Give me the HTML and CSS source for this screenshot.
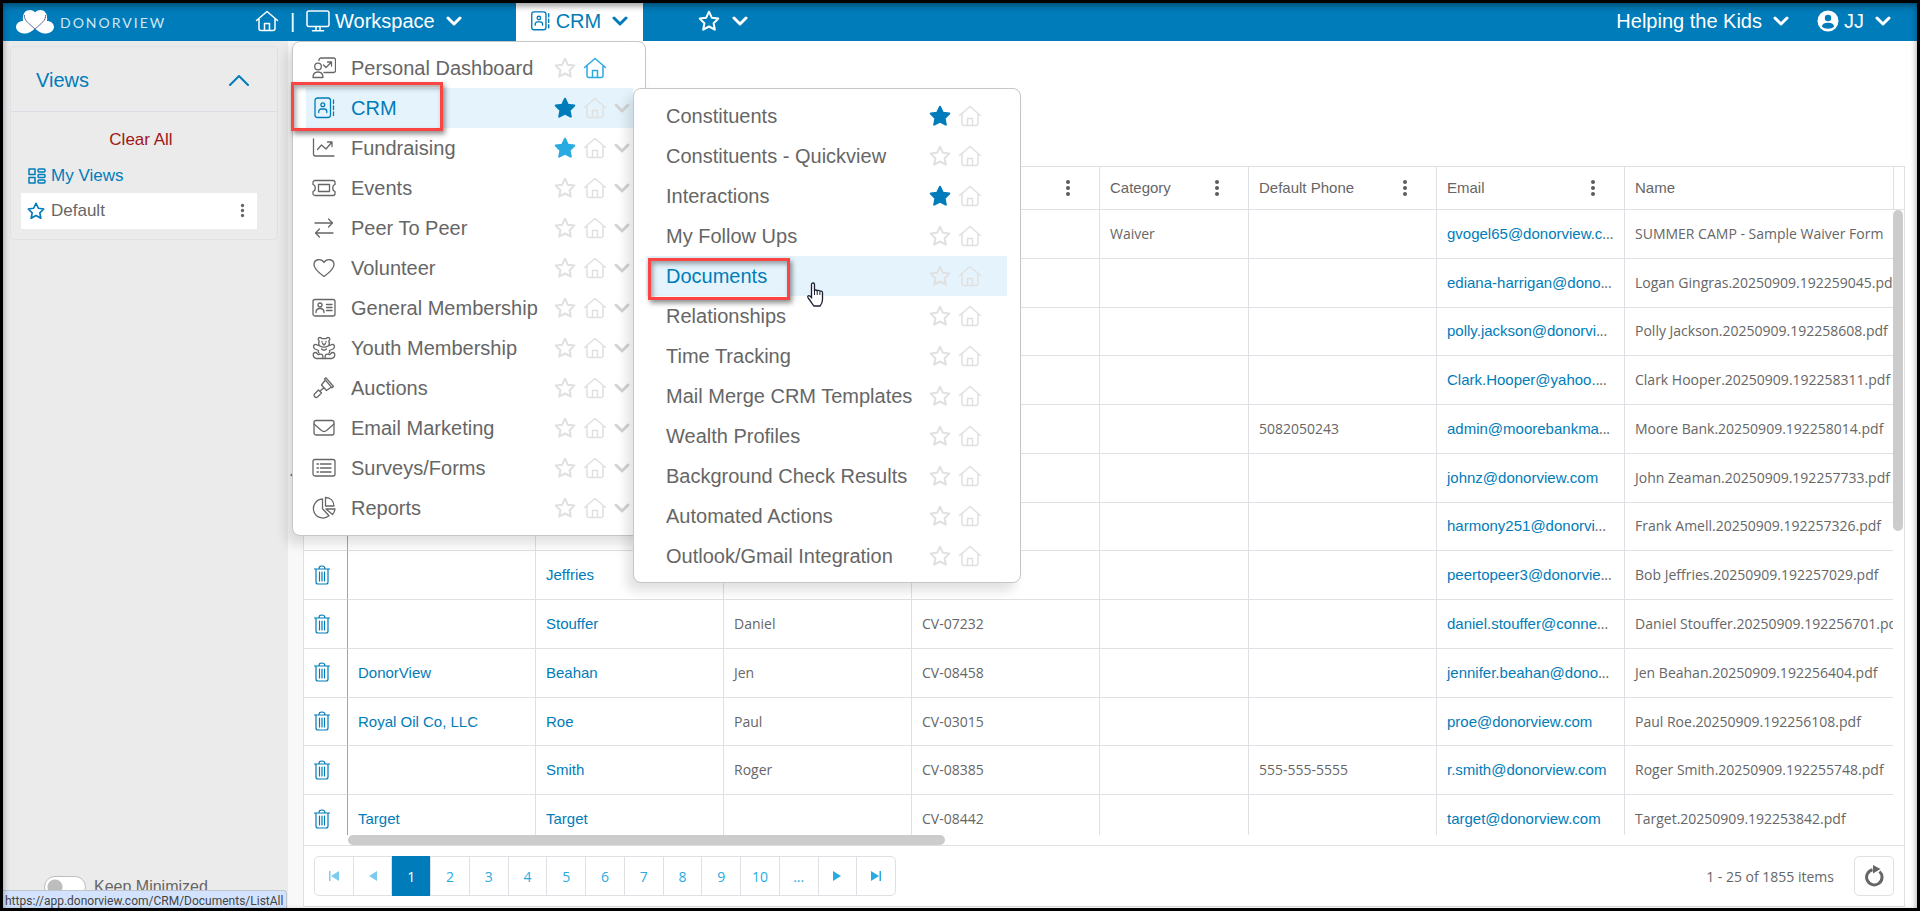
FILE: index.html
```html
<!DOCTYPE html>
<html lang="en">
<head>
    <meta charset="UTF-8">
    <title>Documents - DonorView</title>
    <link rel="stylesheet" href="styles.css">
</head>
<body>
    <!-- shared icons -->
    <svg class="sprite" aria-hidden="true">
        <symbol id="i-home" viewBox="0 0 24 24"><path d="M1.500 11.500 12 2.500l10.500 9M4 10v9.500a2 2 0 0 0 2 2h12a2 2 0 0 0 2-2V10M9.500 21v-6.500h5V21"/></symbol>
        <symbol id="i-star" viewBox="0 0 24 24"><path d="M12 2.700l2.800 6 6.500.900-4.700 4.600 1.200 6.500L12 17.500l-5.800 3.200 1.200-6.500-4.700-4.600 6.500-.900z"/></symbol>
        <symbol id="i-down" viewBox="0 0 16 16"><path d="M2 5l6 6 6-6"/></symbol>
        <symbol id="i-crm" viewBox="0 0 24 24"><rect x="3" y="2" width="15.500" height="19.500" rx="2.500"/><circle cx="10.800" cy="8.700" r="1.900"/><path d="M6.800 16.500v-1a2.500 2.500 0 0 1 2.500-2.500h3a2.500 2.500 0 0 1 2.500 2.500v1M21.500 4v3.500M21.500 10v3.500M21.500 16v3.500"/></symbol>
        <symbol id="i-trash" viewBox="0 0 16 20"><path d="M.500 4h15M5 4c0-2.500 1-3 3-3s3 .500 3 3M2 4v13a2 2 0 0 0 2 2h8a2 2 0 0 0 2-2V4M5.500 7v9M8 7v9M10.500 7v9"/></symbol>
        <symbol id="i-dots" viewBox="0 0 6 18"><circle cx="3" cy="3" r="2"/><circle cx="3" cy="9" r="2"/><circle cx="3" cy="15" r="2"/></symbol>
    </svg>

    <header class="topbar">
        <a class="brand" href="#">
            <svg class="brand__logo" viewBox="0 0 40 26" aria-hidden="true">
                <path fill="#fff" d="M9 24.500a8 7 0 0 1-8-6c0-4 3-6.500 7-6.500C7 4 11 1 15 1c2.500 0 4 1 5 2.500C21 2 23 1 25.500 1 30 1 33 5 32 12c4 0 7 2.500 7 6.500a8 7 0 0 1-8 6c-5 0-7-1.500-11-5-4 3.500-6 5-11 5z"/>
                <path fill="none" stroke="#6f6a9c" d="M9.500 6c-1 5 5 9 10.500 14 5.500-5 11.500-9 10.500-14"/>
            </svg>
            <span class="brand__name">DONORVIEW</span>
        </a>
        <button class="topbar__item" aria-label="Home"><svg class="icon icon--24"><use href="#i-home"/></svg></button>
        <span class="topbar__divider">|</span>
        <button class="topbar__item">
            <svg class="icon icon--24" viewBox="0 0 24 24"><rect x="1" y="2" width="22" height="15.500" rx="2"/><path d="M10 17.500v4M14 17.500v4M6.500 21.800h11"/></svg>
            Workspace
            <svg class="icon icon--bold topbar__arrow"><use href="#i-down"/></svg>
        </button>
        <button class="topbar__item topbar__tab">
            <svg class="icon icon--22"><use href="#i-crm"/></svg>
            CRM
            <svg class="icon icon--bold topbar__arrow"><use href="#i-down"/></svg>
        </button>
        <button class="topbar__item topbar__favorites" aria-label="Favorites">
            <svg class="icon icon--24 icon--mid"><use href="#i-star"/></svg>
            <svg class="icon icon--bold topbar__arrow"><use href="#i-down"/></svg>
        </button>
        <button class="topbar__item topbar__org">
            Helping the Kids
            <svg class="icon icon--bold topbar__arrow"><use href="#i-down"/></svg>
        </button>
        <button class="topbar__item topbar__user">
            <svg class="icon icon--22 avatar" viewBox="0 0 22 22"><circle class="avatar__disc" cx="11" cy="11" r="10.500"/><circle class="avatar__figure" cx="11" cy="8" r="3.200"/><path class="avatar__figure" d="M4.800 16.500c1-3 2.700-3.800 6.200-3.800s5.200.800 6.200 3.800c-3 3-9.400 3-12.400 0z"/></svg>
            JJ
            <svg class="icon icon--bold topbar__arrow"><use href="#i-down"/></svg>
        </button>

        <nav class="menu menu--main">
            <ul class="menu__list">
                <li class="menu__row">
                    <svg class="icon menu__icon" viewBox="0 0 24 24"><circle cx="6" cy="10.500" r="3.300"/><path d="M1 21.500c0-4 2-5.500 5-5.500s5 1.500 5 5.500zM7 4.500V4a2 2 0 0 1 2-2h12.500A1.800 1.800 0 0 1 23.500 4v10.500a2 2 0 0 1-2 2H12M11.500 9l2.500 2.500 5-5M15.500 6h4v4"/></svg>
                    <a class="menu__link" href="#">Personal Dashboard</a>
                    <button class="mark" aria-label="Favorite"><svg class="icon icon--24 icon--mid"><use href="#i-star"/></svg></button>
                    <button class="mark mark--home" aria-label="Set as home"><svg class="icon icon--24"><use href="#i-home"/></svg></button>
                    <span class="menu__more"></span>
                </li>
                <li class="menu__row menu__row--active">
                    <svg class="icon menu__icon" viewBox="0 0 24 24"><use href="#i-crm"/></svg>
                    <a class="menu__link" href="#">CRM</a>
                    <button class="mark mark--on" aria-label="Favorite"><svg class="icon icon--24 icon--mid"><use href="#i-star"/></svg></button>
                    <button class="mark" aria-label="Set as home"><svg class="icon icon--24"><use href="#i-home"/></svg></button>
                    <span class="menu__more"><svg class="icon icon--bold"><use href="#i-down"/></svg></span>
                </li>
                <li class="menu__row">
                    <svg class="icon menu__icon" viewBox="0 0 24 24"><path d="M1.500 3v15a2 2 0 0 0 2 2H22M5.500 13.500l4-4.500 4.500 4 6-7M15.500 6H20v4.500"/></svg>
                    <a class="menu__link" href="#">Fundraising</a>
                    <button class="mark mark--light" aria-label="Favorite"><svg class="icon icon--24 icon--mid"><use href="#i-star"/></svg></button>
                    <button class="mark" aria-label="Set as home"><svg class="icon icon--24"><use href="#i-home"/></svg></button>
                    <span class="menu__more"><svg class="icon icon--bold"><use href="#i-down"/></svg></span>
                </li>
                <li class="menu__row">
                    <svg class="icon menu__icon" viewBox="0 0 24 24"><path d="M3 4.500h18a2 2 0 0 1 2 2v2c-3 1-3 6 0 7v2a2 2 0 0 1-2 2H3a2 2 0 0 1-2-2v-2c3-1 3-6 0-7v-2a2 2 0 0 1 2-2zM6.500 8.500h11v7h-11z"/></svg>
                    <a class="menu__link" href="#">Events</a>
                    <button class="mark" aria-label="Favorite"><svg class="icon icon--24 icon--mid"><use href="#i-star"/></svg></button>
                    <button class="mark" aria-label="Set as home"><svg class="icon icon--24"><use href="#i-home"/></svg></button>
                    <span class="menu__more"><svg class="icon icon--bold"><use href="#i-down"/></svg></span>
                </li>
                <li class="menu__row">
                    <svg class="icon menu__icon" viewBox="0 0 24 24"><path d="M3 7h17.500M16.500 3l4 4-4 4M21 17H3.500M7.500 13l-4 4 4 4"/></svg>
                    <a class="menu__link" href="#">Peer To Peer</a>
                    <button class="mark" aria-label="Favorite"><svg class="icon icon--24 icon--mid"><use href="#i-star"/></svg></button>
                    <button class="mark" aria-label="Set as home"><svg class="icon icon--24"><use href="#i-home"/></svg></button>
                    <span class="menu__more"><svg class="icon icon--bold"><use href="#i-down"/></svg></span>
                </li>
                <li class="menu__row">
                    <svg class="icon menu__icon" viewBox="0 0 24 24"><path d="M12 20.500C5 15.500 2 12 2 8.500 2 3.500 9 1.500 12 6.500c3-5 10-3 10 2 0 3.500-3 7-10 12z"/></svg>
                    <a class="menu__link" href="#">Volunteer</a>
                    <button class="mark" aria-label="Favorite"><svg class="icon icon--24 icon--mid"><use href="#i-star"/></svg></button>
                    <button class="mark" aria-label="Set as home"><svg class="icon icon--24"><use href="#i-home"/></svg></button>
                    <span class="menu__more"><svg class="icon icon--bold"><use href="#i-down"/></svg></span>
                </li>
                <li class="menu__row">
                    <svg class="icon menu__icon" viewBox="0 0 24 24"><rect x="1" y="3.500" width="22" height="16.500" rx="2"/><circle cx="8" cy="9" r="2"/><path d="M4 16.500c0-3 1.500-4 4-4s4 1 4 4M14.500 8.500H20M14.500 11.500H20M14.500 14.500H20"/></svg>
                    <a class="menu__link" href="#">General Membership</a>
                    <button class="mark" aria-label="Favorite"><svg class="icon icon--24 icon--mid"><use href="#i-star"/></svg></button>
                    <button class="mark" aria-label="Set as home"><svg class="icon icon--24"><use href="#i-home"/></svg></button>
                    <span class="menu__more"><svg class="icon icon--bold"><use href="#i-down"/></svg></span>
                </li>
                <li class="menu__row">
                    <svg class="icon menu__icon" viewBox="0 0 24 24"><path d="M8 10C6.500 8.500 6.500 6.500 7.200 5 5.500 4 6 1.500 8 1.500c1 0 1.600.500 2 1.200h4c.400-.700 1-1.200 2-1.200 2 0 2.500 2.500.800 3.500.700 1.500.700 3.500-.800 5-2 1.600-6 1.600-8 0zM10.500 7.500l1.500 1.500 1.500-1.500M10 5.500v.600M14 5.500v.600M7.500 9.500C5.500 10 5 8 3 8.500s-2 3.500 0 4.500l3.500 1.500M16.500 9.500c2 .500 2.500-1.500 4.500-1s2 3.500 0 4.500l-3.500 1.500M6.500 14.500c-.500 1-.200 2 .500 2.500M17.500 14.500c.500 1 .200 2-.500 2.500M10 22.500H4.500c-3.500 0-4.500-5.500-1.500-6 2-.300 2 1.500 3 2s3-1.500 4.500.500c.800 1.200.500 3-.500 3.500zM14 22.500h5.500c3.500 0 4.500-5.500 1.500-6-2-.300-2 1.500-3 2s-3-1.500-4.500.500c-.800 1.200-.500 3 .500 3.500zM10 22.500h4M9.500 13c1.500 1.500 3.500 1.500 5 0"/></svg>
                    <a class="menu__link" href="#">Youth Membership</a>
                    <button class="mark" aria-label="Favorite"><svg class="icon icon--24 icon--mid"><use href="#i-star"/></svg></button>
                    <button class="mark" aria-label="Set as home"><svg class="icon icon--24"><use href="#i-home"/></svg></button>
                    <span class="menu__more"><svg class="icon icon--bold"><use href="#i-down"/></svg></span>
                </li>
                <li class="menu__row">
                    <svg class="icon menu__icon" viewBox="0 0 24 24"><path d="M12.500 3 14 1.800l7.500 8.700-1.500 1.300M12.500 3l7.500 8.800M13 4.500 9.500 9l5 5.500 4.500-3.200M11.800 11.800l-3.300 3M2.500 18l4-4 3 3-4 4c-2 1.500-4.500-1-3-3z"/></svg>
                    <a class="menu__link" href="#">Auctions</a>
                    <button class="mark" aria-label="Favorite"><svg class="icon icon--24 icon--mid"><use href="#i-star"/></svg></button>
                    <button class="mark" aria-label="Set as home"><svg class="icon icon--24"><use href="#i-home"/></svg></button>
                    <span class="menu__more"><svg class="icon icon--bold"><use href="#i-down"/></svg></span>
                </li>
                <li class="menu__row">
                    <svg class="icon menu__icon" viewBox="0 0 24 24"><rect x="2" y="4.500" width="20" height="14.500" rx="2"/><path d="M2 8l7.500 6.500c1.500 1.200 3.500 1.200 5 0L22 8"/></svg>
                    <a class="menu__link" href="#">Email Marketing</a>
                    <button class="mark" aria-label="Favorite"><svg class="icon icon--24 icon--mid"><use href="#i-star"/></svg></button>
                    <button class="mark" aria-label="Set as home"><svg class="icon icon--24"><use href="#i-home"/></svg></button>
                    <span class="menu__more"><svg class="icon icon--bold"><use href="#i-down"/></svg></span>
                </li>
                <li class="menu__row">
                    <svg class="icon menu__icon" viewBox="0 0 24 24"><rect x="1" y="3.500" width="22" height="16.500" rx="2"/><path d="M5 8h1.500M5 12h1.500M5 16h1.500M8.500 8H19M8.500 12H19M8.500 16H19"/></svg>
                    <a class="menu__link" href="#">Surveys/Forms</a>
                    <button class="mark" aria-label="Favorite"><svg class="icon icon--24 icon--mid"><use href="#i-star"/></svg></button>
                    <button class="mark" aria-label="Set as home"><svg class="icon icon--24"><use href="#i-home"/></svg></button>
                    <span class="menu__more"><svg class="icon icon--bold"><use href="#i-down"/></svg></span>
                </li>
                <li class="menu__row">
                    <svg class="icon menu__icon" viewBox="0 0 24 24"><path d="M10.500 3A9.500 9.500 0 1 0 17 19.800l-6.500-7zM13.500 1.500V10H22c-.200-4.800-3.500-8.300-8.500-8.500zM14 13h9c-.300 2.300-1.200 4-2.500 5.500z"/></svg>
                    <a class="menu__link" href="#">Reports</a>
                    <button class="mark" aria-label="Favorite"><svg class="icon icon--24 icon--mid"><use href="#i-star"/></svg></button>
                    <button class="mark" aria-label="Set as home"><svg class="icon icon--24"><use href="#i-home"/></svg></button>
                    <span class="menu__more"><svg class="icon icon--bold"><use href="#i-down"/></svg></span>
                </li>
            </ul>
            <span class="highlight highlight--crm"></span>
        </nav>

        <nav class="menu menu--sub">
            <ul class="menu__list">
                <li class="menu__row">
                    <a class="menu__link" href="#">Constituents</a>
                    <button class="mark mark--on" aria-label="Favorite"><svg class="icon icon--24 icon--mid"><use href="#i-star"/></svg></button>
                    <button class="mark" aria-label="Set as home"><svg class="icon icon--24"><use href="#i-home"/></svg></button>
                </li>
                <li class="menu__row">
                    <a class="menu__link" href="#">Constituents - Quickview</a>
                    <button class="mark" aria-label="Favorite"><svg class="icon icon--24 icon--mid"><use href="#i-star"/></svg></button>
                    <button class="mark" aria-label="Set as home"><svg class="icon icon--24"><use href="#i-home"/></svg></button>
                </li>
                <li class="menu__row">
                    <a class="menu__link" href="#">Interactions</a>
                    <button class="mark mark--on" aria-label="Favorite"><svg class="icon icon--24 icon--mid"><use href="#i-star"/></svg></button>
                    <button class="mark" aria-label="Set as home"><svg class="icon icon--24"><use href="#i-home"/></svg></button>
                </li>
                <li class="menu__row">
                    <a class="menu__link" href="#">My Follow Ups</a>
                    <button class="mark" aria-label="Favorite"><svg class="icon icon--24 icon--mid"><use href="#i-star"/></svg></button>
                    <button class="mark" aria-label="Set as home"><svg class="icon icon--24"><use href="#i-home"/></svg></button>
                </li>
                <li class="menu__row menu__row--active">
                    <a class="menu__link" href="#">Documents</a>
                    <button class="mark" aria-label="Favorite"><svg class="icon icon--24 icon--mid"><use href="#i-star"/></svg></button>
                    <button class="mark" aria-label="Set as home"><svg class="icon icon--24"><use href="#i-home"/></svg></button>
                </li>
                <li class="menu__row">
                    <a class="menu__link" href="#">Relationships</a>
                    <button class="mark" aria-label="Favorite"><svg class="icon icon--24 icon--mid"><use href="#i-star"/></svg></button>
                    <button class="mark" aria-label="Set as home"><svg class="icon icon--24"><use href="#i-home"/></svg></button>
                </li>
                <li class="menu__row">
                    <a class="menu__link" href="#">Time Tracking</a>
                    <button class="mark" aria-label="Favorite"><svg class="icon icon--24 icon--mid"><use href="#i-star"/></svg></button>
                    <button class="mark" aria-label="Set as home"><svg class="icon icon--24"><use href="#i-home"/></svg></button>
                </li>
                <li class="menu__row">
                    <a class="menu__link" href="#">Mail Merge CRM Templates</a>
                    <button class="mark" aria-label="Favorite"><svg class="icon icon--24 icon--mid"><use href="#i-star"/></svg></button>
                    <button class="mark" aria-label="Set as home"><svg class="icon icon--24"><use href="#i-home"/></svg></button>
                </li>
                <li class="menu__row">
                    <a class="menu__link" href="#">Wealth Profiles</a>
                    <button class="mark" aria-label="Favorite"><svg class="icon icon--24 icon--mid"><use href="#i-star"/></svg></button>
                    <button class="mark" aria-label="Set as home"><svg class="icon icon--24"><use href="#i-home"/></svg></button>
                </li>
                <li class="menu__row">
                    <a class="menu__link" href="#">Background Check Results</a>
                    <button class="mark" aria-label="Favorite"><svg class="icon icon--24 icon--mid"><use href="#i-star"/></svg></button>
                    <button class="mark" aria-label="Set as home"><svg class="icon icon--24"><use href="#i-home"/></svg></button>
                </li>
                <li class="menu__row">
                    <a class="menu__link" href="#">Automated Actions</a>
                    <button class="mark" aria-label="Favorite"><svg class="icon icon--24 icon--mid"><use href="#i-star"/></svg></button>
                    <button class="mark" aria-label="Set as home"><svg class="icon icon--24"><use href="#i-home"/></svg></button>
                </li>
                <li class="menu__row">
                    <a class="menu__link" href="#">Outlook/Gmail Integration</a>
                    <button class="mark" aria-label="Favorite"><svg class="icon icon--24 icon--mid"><use href="#i-star"/></svg></button>
                    <button class="mark" aria-label="Set as home"><svg class="icon icon--24"><use href="#i-home"/></svg></button>
                </li>
            </ul>
            <span class="highlight highlight--documents"></span>
            <svg class="cursor" viewBox="0 0 20 26" aria-hidden="true"><path d="M5.500 2.500c0-2 3-2 3 0V9c0-1.500 2.700-1.300 2.700.300 0-1.500 2.700-1.300 2.700.500 0-1.300 2.600-1 2.600.700v7c0 3-1 5-2.500 6.500H8c-1.500-1.500-3-4.500-5.500-7.500-2-3 .500-4 3-1z" fill="#fff" stroke="#1b2033" stroke-width="1.300"/><path d="M8.500 8.500V13M11.200 9v4M13.900 10v3" stroke="#1b2033"/></svg>
        </nav>
    </header>

    <div class="layout">
        <aside class="sidebar">
            <section class="views">
                <header class="views__header">
                    <h2 class="views__title">Views</h2>
                    <button class="views__toggle" aria-label="Collapse views"><svg class="icon" viewBox="0 0 20 12"><path d="M1 11l9-9 9 9"/></svg></button>
                </header>
                <a class="views__clear" href="#">Clear All</a>
                <a class="views__group" href="#">
                    <svg class="icon" viewBox="0 0 18 16"><rect x="1" y="1" width="6" height="5.500"/><rect x="1" y="9.500" width="6" height="5.500"/><rect x="10" y="1" width="7" height="3" rx="1"/><rect x="10" y="6.500" width="7" height="3" rx="1"/><rect x="10" y="12" width="7" height="3" rx="1"/></svg>
                    My Views
                </a>
                <div class="views__item">
                    <svg class="icon icon--mid"><use href="#i-star"/></svg>
                    <a class="views__item-link" href="#">Default</a>
                    <button class="views__item-menu" aria-label="View options"><svg class="dots"><use href="#i-dots"/></svg></button>
                </div>
            </section>
            <label class="minimize">
                <input class="minimize__switch" type="checkbox">
                Keep Minimized
            </label>
        </aside>

        <div class="splitter">
            <button class="splitter__collapse" aria-label="Collapse sidebar"><svg viewBox="0 0 6 10"><path d="M6 0v10L0 5z"/></svg></button>
        </div>

        <main class="content">
            <div class="grid">
                <div class="grid__body">
                    <div class="grid__viewport">
                        <table class="grid__table">
                            <colgroup>
                                <col class="col-action">
                                <col class="col-text">
                                <col class="col-text">
                                <col class="col-text">
                                <col class="col-text">
                                <col class="col-category">
                                <col class="col-text">
                                <col class="col-text">
                                <col>
                            </colgroup>
                            <thead>
                                <tr>
                                    <th></th>
                                    <th></th>
                                    <th></th>
                                    <th></th>
                                    <th><div class="th"><span></span><button class="th__menu" aria-label="Column menu"><svg class="dots"><use href="#i-dots"/></svg></button></div></th>
                                    <th><div class="th">Category<button class="th__menu" aria-label="Column menu"><svg class="dots"><use href="#i-dots"/></svg></button></div></th>
                                    <th><div class="th">Default Phone<button class="th__menu" aria-label="Column menu"><svg class="dots"><use href="#i-dots"/></svg></button></div></th>
                                    <th><div class="th">Email<button class="th__menu" aria-label="Column menu"><svg class="dots"><use href="#i-dots"/></svg></button></div></th>
                                    <th><div class="th">Name</div></th>
                                </tr>
                            </thead>
                            <tbody>
                                <tr>
                                    <td><button class="delete" aria-label="Delete"><svg class="icon"><use href="#i-trash"/></svg></button></td>
                                    <td></td><td></td><td></td><td></td>
                                    <td>Waiver</td><td></td>
                                    <td><a href="#">gvogel65@donorview.c</a>...</td>
                                    <td>SUMMER CAMP - Sample Waiver Form</td>
                                </tr>
                                <tr>
                                    <td><button class="delete" aria-label="Delete"><svg class="icon"><use href="#i-trash"/></svg></button></td>
                                    <td></td><td></td><td></td><td></td><td></td><td></td>
                                    <td><a href="#">ediana-harrigan@dono</a>...</td>
                                    <td>Logan Gingras.20250909.192259045.pdf</td>
                                </tr>
                                <tr>
                                    <td><button class="delete" aria-label="Delete"><svg class="icon"><use href="#i-trash"/></svg></button></td>
                                    <td></td><td></td><td></td><td></td><td></td><td></td>
                                    <td><a href="#">polly.jackson@donorvi</a>...</td>
                                    <td>Polly Jackson.20250909.192258608.pdf</td>
                                </tr>
                                <tr>
                                    <td><button class="delete" aria-label="Delete"><svg class="icon"><use href="#i-trash"/></svg></button></td>
                                    <td></td><td></td><td></td><td></td><td></td><td></td>
                                    <td><a href="#">Clark.Hooper@yahoo.</a>...</td>
                                    <td>Clark Hooper.20250909.192258311.pdf</td>
                                </tr>
                                <tr>
                                    <td><button class="delete" aria-label="Delete"><svg class="icon"><use href="#i-trash"/></svg></button></td>
                                    <td></td><td></td><td></td><td></td><td></td>
                                    <td>5082050243</td>
                                    <td><a href="#">admin@moorebankma</a>...</td>
                                    <td>Moore Bank.20250909.192258014.pdf</td>
                                </tr>
                                <tr>
                                    <td><button class="delete" aria-label="Delete"><svg class="icon"><use href="#i-trash"/></svg></button></td>
                                    <td></td><td></td><td></td><td></td><td></td><td></td>
                                    <td><a href="#">johnz@donorview.com</a></td>
                                    <td>John Zeaman.20250909.192257733.pdf</td>
                                </tr>
                                <tr>
                                    <td><button class="delete" aria-label="Delete"><svg class="icon"><use href="#i-trash"/></svg></button></td>
                                    <td></td><td></td><td></td><td></td><td></td><td></td>
                                    <td><a href="#">harmony251@donorvi</a>...</td>
                                    <td>Frank Amell.20250909.192257326.pdf</td>
                                </tr>
                                <tr>
                                    <td><button class="delete" aria-label="Delete"><svg class="icon"><use href="#i-trash"/></svg></button></td>
                                    <td></td>
                                    <td><a href="#">Jeffries</a></td>
                                    <td></td><td></td><td></td><td></td>
                                    <td><a href="#">peertopeer3@donorvie</a>...</td>
                                    <td>Bob Jeffries.20250909.192257029.pdf</td>
                                </tr>
                                <tr>
                                    <td><button class="delete" aria-label="Delete"><svg class="icon"><use href="#i-trash"/></svg></button></td>
                                    <td></td>
                                    <td><a href="#">Stouffer</a></td>
                                    <td>Daniel</td>
                                    <td>CV-07232</td>
                                    <td></td><td></td>
                                    <td><a href="#">daniel.stouffer@conne</a>...</td>
                                    <td>Daniel Stouffer.20250909.192256701.pdf</td>
                                </tr>
                                <tr>
                                    <td><button class="delete" aria-label="Delete"><svg class="icon"><use href="#i-trash"/></svg></button></td>
                                    <td><a href="#">DonorView</a></td>
                                    <td><a href="#">Beahan</a></td>
                                    <td>Jen</td>
                                    <td>CV-08458</td>
                                    <td></td><td></td>
                                    <td><a href="#">jennifer.beahan@dono</a>...</td>
                                    <td>Jen Beahan.20250909.192256404.pdf</td>
                                </tr>
                                <tr>
                                    <td><button class="delete" aria-label="Delete"><svg class="icon"><use href="#i-trash"/></svg></button></td>
                                    <td><a href="#">Royal Oil Co, LLC</a></td>
                                    <td><a href="#">Roe</a></td>
                                    <td>Paul</td>
                                    <td>CV-03015</td>
                                    <td></td><td></td>
                                    <td><a href="#">proe@donorview.com</a></td>
                                    <td>Paul Roe.20250909.192256108.pdf</td>
                                </tr>
                                <tr>
                                    <td><button class="delete" aria-label="Delete"><svg class="icon"><use href="#i-trash"/></svg></button></td>
                                    <td></td>
                                    <td><a href="#">Smith</a></td>
                                    <td>Roger</td>
                                    <td>CV-08385</td>
                                    <td></td>
                                    <td>555-555-5555</td>
                                    <td><a href="#">r.smith@donorview.com</a></td>
                                    <td>Roger Smith.20250909.192255748.pdf</td>
                                </tr>
                                <tr>
                                    <td><button class="delete" aria-label="Delete"><svg class="icon"><use href="#i-trash"/></svg></button></td>
                                    <td><a href="#">Target</a></td>
                                    <td><a href="#">Target</a></td>
                                    <td></td>
                                    <td>CV-08442</td>
                                    <td></td><td></td>
                                    <td><a href="#">target@donorview.com</a></td>
                                    <td>Target.20250909.192253842.pdf</td>
                                </tr>
                            </tbody>
                        </table>
                    </div>
                    <div class="grid__rail">
                        <div class="grid__rail-head"></div>
                        <div class="grid__thumb-y"></div>
                    </div>
                </div>
                <div class="grid__scroll-x"><div class="grid__thumb-x"></div></div>
                <footer class="pager">
                    <div class="pager__pages">
                        <button class="pager__page pager__page--off" aria-label="First page"><svg viewBox="0 0 12 12"><path d="M1 1h1.500v10H1zM11 1v10L3 6z"/></svg></button>
                        <button class="pager__page pager__page--off" aria-label="Previous page"><svg viewBox="0 0 12 12"><path d="M10 1v10L2 6z"/></svg></button>
                        <button class="pager__page pager__page--current">1</button>
                        <button class="pager__page">2</button>
                        <button class="pager__page">3</button>
                        <button class="pager__page">4</button>
                        <button class="pager__page">5</button>
                        <button class="pager__page">6</button>
                        <button class="pager__page">7</button>
                        <button class="pager__page">8</button>
                        <button class="pager__page">9</button>
                        <button class="pager__page">10</button>
                        <button class="pager__page">...</button>
                        <button class="pager__page" aria-label="Next page"><svg viewBox="0 0 12 12"><path d="M2 1v10l8-5z"/></svg></button>
                        <button class="pager__page" aria-label="Last page"><svg viewBox="0 0 12 12"><path d="M1 1v10l8-5zM9.500 1H11v10H9.500z"/></svg></button>
                    </div>
                    <span class="pager__info">1 - 25 of 1855 items</span>
                    <button class="pager__refresh" aria-label="Refresh"><svg viewBox="0 0 20 22"><path d="M15.500 6.500A7.700 7.700 0 1 1 8.500 4.700" fill="none" stroke="currentColor" stroke-width="3"/><path d="M9 0l7.500 4L9 8.500z" fill="currentColor"/></svg></button>
                </footer>
            </div>
        </main>
    </div>

    <div class="statusbar">https://app.donorview.com/CRM/Documents/ListAll</div>
</body>
</html>
```

FILE: styles.css
```css
* {
    box-sizing: border-box;
}

:root {
    --blue: #007cba;
    --light-blue: #29abe2;
    --hover: #e5f4fc;
    --text: #666666;
    --muted: #e0e0e0;
    --line: #dee0e5;
    --data-font: "Open Sans", "Noto Sans", sans-serif;
}

html,
body {
    height: 100%;
    margin: 0;
}

body {
    position: relative;
    display: flex;
    flex-direction: column;
    border: 3px solid #000;
    color: var(--text);
    font-family: "Liberation Sans", Arial, sans-serif;
    font-size: 15px;
    overflow: hidden;
}

/* soft inner shadow of the window frame */
body::after {
    content: "";
    position: absolute;
    inset: 0;
    box-shadow: inset 0 3px 6px rgba(0, 0, 0, 0.4);
    pointer-events: none;
    z-index: 30;
}

a {
    color: var(--blue);
    text-decoration: none;
}

button {
    background: none;
    border: 0;
    color: inherit;
    font: inherit;
    padding: 0;
}

.sprite {
    position: absolute;
    width: 0;
    height: 0;
}

.icon {
    display: block;
    flex: none;
    fill: none;
    stroke: currentColor;
    stroke-width: 1.5;
    stroke-linecap: round;
    stroke-linejoin: round;
    width: 16px;
    height: 16px;
}

.icon--22 {
    width: 22px;
    height: 22px;
}

.icon--24 {
    width: 24px;
    height: 24px;
}

.icon--mid {
    stroke-width: 2;
}

.icon--bold {
    stroke-width: 3;
}

.dots {
    display: block;
    fill: currentColor;
    width: 6px;
    height: 18px;
}

/* top bar */
.topbar {
    position: relative;
    z-index: 10;
    flex: none;
    display: flex;
    align-items: flex-start;
    height: 38px;
    background: var(--blue);
    color: #fff;
    font-size: 20px;
    padding: 0 26px 0 12px;
}

.topbar__item {
    display: flex;
    align-items: center;
    gap: 5px;
    height: 36px;
    white-space: nowrap;
}

.topbar__arrow {
    margin-left: 6px;
}

.topbar__divider {
    width: 27px;
    line-height: 36px;
    text-align: center;
}

.topbar__tab {
    height: 38px;
    margin-left: 54px;
    padding: 0 15px 2px 13px;
    background: #fff;
    color: var(--blue);
}

.topbar__favorites {
    margin-left: 54px;
}

.topbar__org {
    margin-left: auto;
}

.topbar__user {
    margin-left: 28px;
}

.brand {
    display: flex;
    align-items: center;
    gap: 5px;
    width: 240px;
    height: 38px;
    color: #fff;
}

.brand__logo {
    width: 40px;
    height: 26px;
}

.brand__name {
    color: #cfe8f5;
    font-family: Lato, sans-serif;
    font-size: 14px;
    letter-spacing: 2px;
}

.avatar {
    stroke: none;
}

.avatar__disc {
    fill: #fff;
}

.avatar__figure {
    fill: var(--blue);
}

/* drop-down menus */
.menu {
    position: absolute;
    background: #fff;
    border: 1px solid #c4c6c8;
    border-radius: 8px;
    box-shadow: -6px 8px 12px rgba(0, 0, 0, 0.12);
    color: var(--text);
}

.menu--main {
    top: 38px;
    left: 289px;
    width: 354px;
    padding: 6px 12px 7px 13px;
}

.menu--sub {
    top: 85px;
    left: 630px;
    width: 388px;
    padding: 7px 13px 6px 12px;
}

.menu__list {
    list-style: none;
    margin: 0;
    padding: 0;
}

.menu__row {
    display: flex;
    align-items: center;
    height: 40px;
}

.menu--sub .menu__row {
    padding: 0 22px 0 20px;
}

.menu__row--active {
    background: var(--hover);
    color: var(--blue);
}

.menu__icon {
    width: 24px;
    height: 24px;
    margin: 0 15px 0 6px;
    stroke-width: 1.3;
}

.menu__link {
    flex: 1;
    color: inherit;
    white-space: nowrap;
}

.mark {
    display: flex;
    justify-content: center;
    width: 30px;
    color: var(--muted);
}

.mark--home {
    color: var(--light-blue);
}

.mark--on {
    color: var(--blue);
}

.mark--light {
    color: var(--light-blue);
}

.mark--on .icon,
.mark--light .icon {
    fill: currentColor;
}

.menu__more {
    display: flex;
    justify-content: center;
    width: 23px;
    color: #d4d4d4;
}

/* red call-out frames */
.highlight {
    position: absolute;
    border: 3px solid #fb4444;
    box-shadow: 2px 3px 5px rgba(0, 0, 0, 0.45), inset 2px 3px 5px rgba(0, 0, 0, 0.35);
    pointer-events: none;
}

.highlight--crm {
    top: 40px;
    left: -2px;
    width: 152px;
    height: 49px;
}

.highlight--documents {
    top: 169px;
    left: 14px;
    width: 142px;
    height: 42px;
}

.cursor {
    position: absolute;
    top: 193px;
    left: 172px;
    width: 20px;
    height: 26px;
    fill: none;
}

/* layout */
.layout {
    flex: 1;
    display: flex;
    min-height: 0;
}

.sidebar {
    flex: none;
    display: flex;
    flex-direction: column;
    justify-content: space-between;
    width: 285px;
    background: #ebebeb;
    padding: 5px 10px 10px 7px;
}

.splitter {
    flex: none;
    display: flex;
    align-items: center;
    width: 15px;
    background: #f8f8f8;
    padding-left: 2px;
}

.splitter__collapse svg {
    display: block;
    width: 6px;
    height: 10px;
    fill: #777;
}

.content {
    flex: 1;
    display: flex;
    min-width: 0;
    padding: 125px 12px 1px 0;
}

.views {
    height: 194px;
    border: 1px solid #dfe1e6;
    border-radius: 4px;
    font-size: 17px;
}

.views__header {
    display: flex;
    align-items: center;
    justify-content: space-between;
    height: 65px;
    border-bottom: 1px solid #dadde3;
    color: var(--blue);
    padding: 2px 28px 0 25px;
}

.views__title {
    font-size: 20px;
    font-weight: normal;
    margin: 0;
}

.views__toggle .icon {
    width: 20px;
    height: 12px;
    stroke-width: 2;
}

.views__clear {
    display: block;
    color: #a01717;
    line-height: 20px;
    padding: 18px 6px 16px 0;
    text-align: center;
}

.views__group {
    display: flex;
    align-items: center;
    gap: 5px;
    line-height: 20px;
    padding: 0 17px;
}

.views__group .icon {
    width: 18px;
}

.views__item {
    display: flex;
    align-items: center;
    gap: 5px;
    height: 36px;
    background: #fff;
    margin: 7px 20px 0 10px;
    padding: 0 12px 1px 5px;
}

.views__item .icon {
    width: 20px;
    height: 20px;
    color: var(--blue);
}

.views__item-link {
    flex: 1;
    color: var(--text);
}

.views__item-menu .dots {
    width: 5px;
    height: 15px;
}

.minimize {
    display: flex;
    align-items: center;
    gap: 8px;
    font-size: 16px;
    padding-left: 34px;
}

.minimize__switch {
    appearance: none;
    width: 42px;
    height: 22px;
    border: 1px solid #bdbdbd;
    border-radius: 11px;
    background: #fff radial-gradient(circle at 10px 10px, #bdbdbd 7px, transparent 8px);
    margin: 0;
}

/* grid */
.grid {
    flex: 1;
    display: flex;
    flex-direction: column;
    min-width: 0;
    border: 1px solid var(--line);
    background: #fff;
}

.grid__body {
    flex: 1;
    display: flex;
    min-height: 0;
    overflow: hidden;
}

.grid__viewport {
    flex: 1;
    min-width: 0;
    overflow: hidden;
}

.grid__table {
    width: 100%;
    height: 677px;
    border-collapse: separate;
    border-spacing: 0;
    table-layout: fixed;
}

.col-action {
    width: 44px;
}

.col-text {
    width: 188px;
}

.col-category {
    width: 149px;
}

.grid__table th,
.grid__table td {
    border-right: 1px solid var(--line);
    border-bottom: 1px solid var(--line);
    overflow: hidden;
    padding: 0 0 1px 10px;
    text-align: left;
    white-space: nowrap;
}

.grid__table th {
    height: 43px;
    font-weight: normal;
}

.grid__table td {
    font-family: var(--data-font);
    font-size: 14px;
}

.grid__table td a {
    font-family: "Liberation Sans", Arial, sans-serif;
    font-size: 15px;
}

.grid__table th:first-child,
.grid__table td:first-child {
    border-right-color: #a2a4a8;
}

.grid__table th:last-child,
.grid__table td:last-child {
    border-right: 0;
}

.th {
    display: flex;
    align-items: center;
    justify-content: space-between;
    padding-right: 28px;
}

.th__menu {
    color: #5c5c5c;
}

.delete {
    display: block;
    color: var(--blue);
}

.delete .icon {
    height: 20px;
    stroke-width: 1.2;
}

.grid__rail {
    flex: none;
    width: 11px;
}

.grid__rail-head {
    height: 43px;
    border-left: 1px solid var(--line);
    border-bottom: 1px solid var(--line);
}

.grid__thumb-y {
    width: 10px;
    height: 321px;
    border-radius: 5px;
    background: #ccc;
}

.grid__scroll-x {
    flex: none;
    padding-left: 44px;
}

.grid__thumb-x {
    width: 597px;
    height: 10px;
    border-radius: 5px;
    background: #ccc;
}

/* pager */
.pager {
    flex: none;
    display: flex;
    align-items: center;
    height: 61px;
    border-top: 1px solid var(--line);
    font-family: var(--data-font);
    font-size: 14px;
    padding: 0 10px;
}

.pager__pages {
    display: flex;
    width: 582px;
    height: 40px;
    border: 1px solid var(--line);
    border-radius: 5px;
}

.pager__page {
    flex: 1;
    color: var(--light-blue);
    border-left: 1px solid var(--line);
}

.pager__page:first-child {
    border-left: 0;
}

.pager__page svg {
    display: block;
    width: 12px;
    height: 12px;
    fill: currentColor;
    margin: 0 auto;
}

.pager__page--off svg {
    opacity: 0.6;
}

.pager__page--current {
    background: var(--blue);
    color: #fff;
    margin: -1px 0;
}

.pager__info {
    margin-left: auto;
}

.pager__refresh {
    width: 40px;
    height: 40px;
    border: 1px solid var(--line);
    border-radius: 5px;
    margin-left: 20px;
}

.pager__refresh svg {
    display: block;
    width: 20px;
    height: 22px;
    margin: 0 auto;
}

/* browser link preview */
.statusbar {
    position: absolute;
    bottom: 0;
    left: 0;
    z-index: 20;
    width: 284px;
    height: 18px;
    background: #d3e3fd;
    border: 1px solid #c0c4cc;
    border-width: 1px 1px 0 0;
    border-radius: 0 4px 0 0;
    color: #444;
    font-family: Roboto, sans-serif;
    font-size: 12px;
    line-height: 20px;
    padding-left: 2px;
    white-space: nowrap;
}
```
